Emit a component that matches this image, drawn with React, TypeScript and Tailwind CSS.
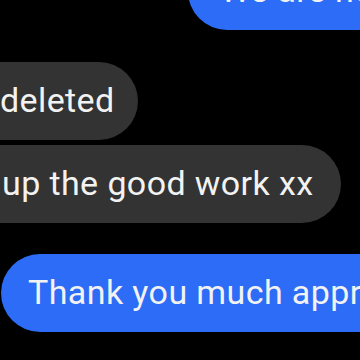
export default function App() {
  return (
    <div
      className="flex h-[360px] w-[360px] flex-col overflow-hidden bg-black text-[34px] leading-[40px] tracking-[0.4px] text-[#f2f2f2]"
      style={{ fontFamily: 'Roboto, "Noto Sans", sans-serif' }}
    >
      {/* outgoing, cut at top */}
      <div className="ml-[188px] mt-[-48px] h-[78px] shrink-0 whitespace-nowrap rounded-l-[39px] bg-[#2c6cf6] pl-[32px] pt-[18px]">
        We are home now
      </div>

      {/* incoming group */}
      <div className="mt-[32px] flex flex-col items-start gap-[5px]">
        <div className="h-[78px] whitespace-nowrap rounded-r-[39px] bg-[#333333] pr-[23px] pt-[18px]">
          deleted
        </div>
        <div className="h-[78px] whitespace-nowrap rounded-r-[39px] bg-[#333333] pl-[2px] pr-[27px] pt-[18px]">
          up the good work xx
        </div>
      </div>

      {/* outgoing */}
      <div className="ml-[1px] mt-[31px] h-[78px] shrink-0 whitespace-nowrap rounded-l-[39px] bg-[#2c6cf6] pl-[27px] pt-[18px]">
        Thank you much appreciated
      </div>
    </div>
  );
}
